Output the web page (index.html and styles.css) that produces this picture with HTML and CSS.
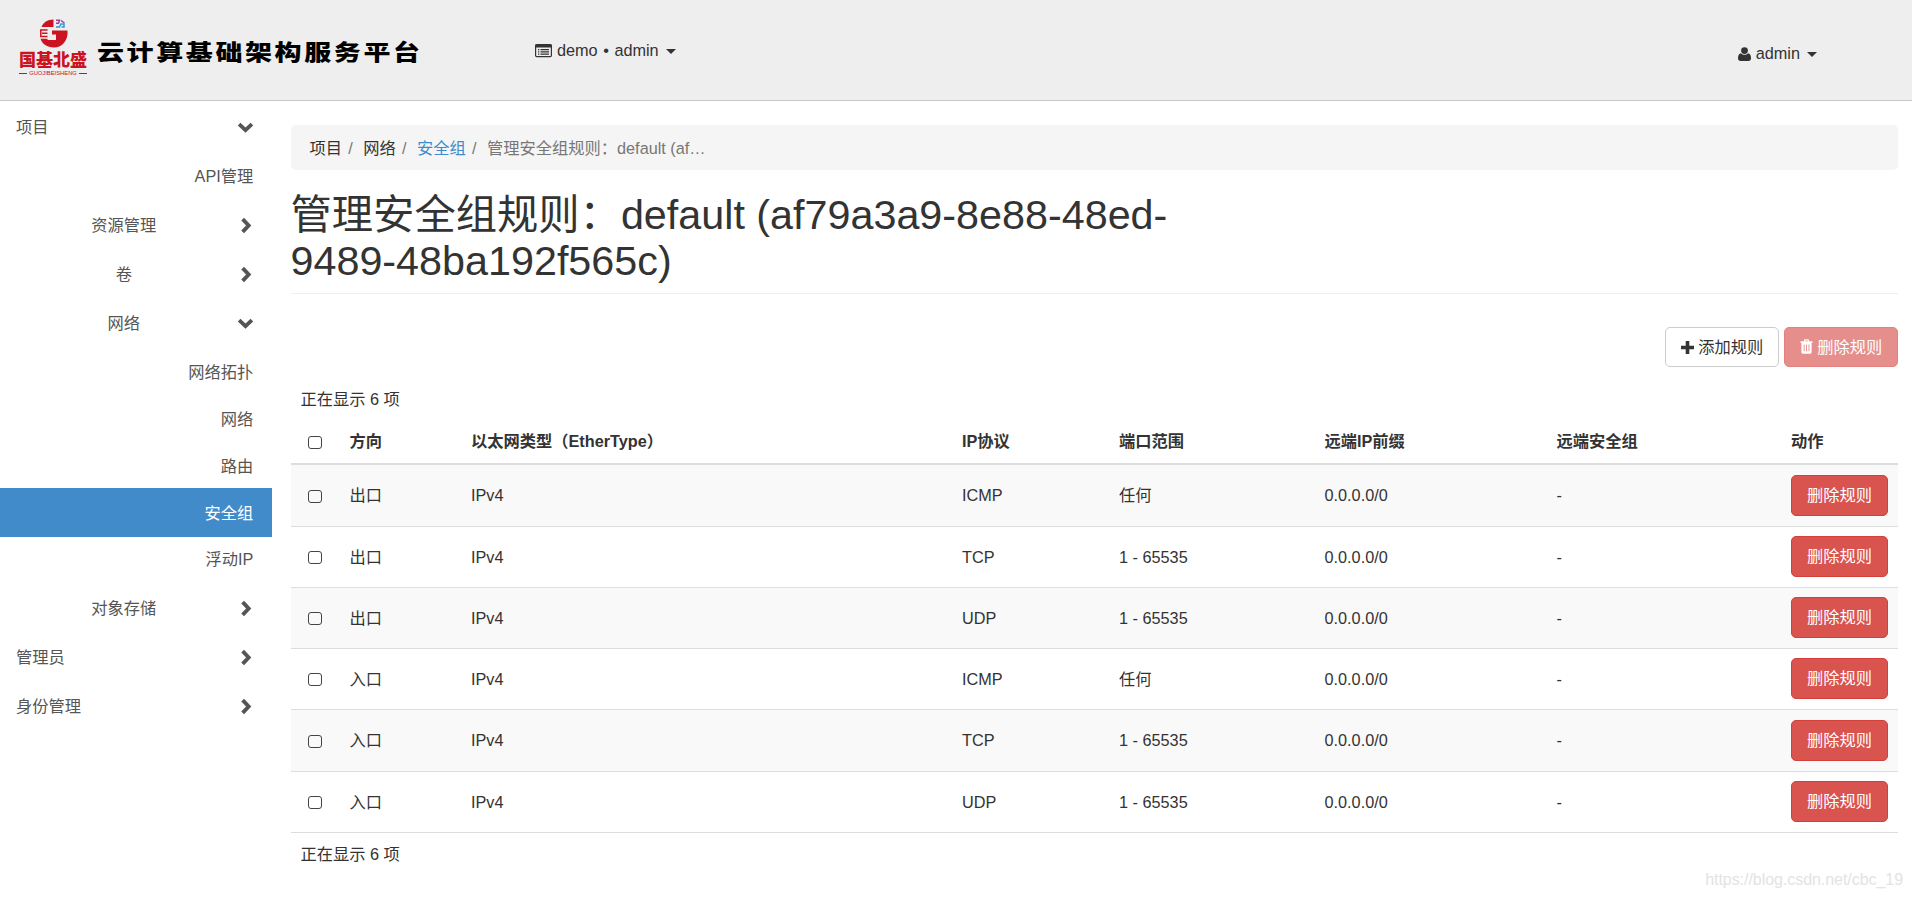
FILE: index.html
```html
<!DOCTYPE html>
<html lang="zh-CN">
<head>
    <meta charset="UTF-8">
    <meta name="viewport" content="width=device-width, initial-scale=1.0">
    <title>管理安全组规则</title>
    <link rel="stylesheet" href="styles.css">
</head>
<body>
    <!-- 图标 -->
    <svg width="0" height="0" class="sprite">
        <symbol id="chevron-down" viewBox="0 0 16 16"><path d="M2 4.800l6 5.600 6-5.600" fill="none" stroke="currentColor" stroke-width="3.600"/></symbol>
        <symbol id="chevron-right" viewBox="0 0 16 16"><path d="M5.300 2l5.700 6-5.700 6" fill="none" stroke="currentColor" stroke-width="3.600"/></symbol>
        <symbol id="trash" viewBox="0 0 13 15"><path d="M4 2.200V1.300C4 .6 4.500 .3 5 .3h3c.5 0 1 .3 1 1v.9h3.500v1.600H11.600V13c0 1-.6 1.700-1.400 1.700H2.800c-.8 0-1.400-.7-1.400-1.700V3.800H.5V2.200zM5.200 2.200h2.600v-.8H5.200zM3.700 5.500v6.800h.9V5.500zm2.400 0v6.800H7V5.500zm2.400 0v6.800h.9V5.500z" fill="currentColor" fill-rule="evenodd"/></symbol>
    </svg>

    <!-- 顶部导航 -->
    <header class="navbar">
        <div class="brand">
            <div class="logo">
                <svg class="emblem" width="30" height="29" viewBox="0 0 30 29">
                    <path d="M14.500 .5V8H2.500C4 3.500 8.500 .5 14.500 .5z" fill="#cb1420"/>
                    <path d="M13 11.500h15.500C29.500 21 23.500 28.500 15 28.500 8 28.500 3 25 1.500 19.800H8.500v1.200H17v-5.500h-4z" fill="#cb1420"/>
                    <path d="M8.500 11H1.800v6.500h6.700M3 14.200h5.500" fill="none" stroke="#cb1420" stroke-width="1.500"/>
                    <path d="M17 1.200h3.500l-1 3H17M22 1.500l3.500 2.500" fill="none" stroke="#a43fa6" stroke-width="1.500"/>
                    <path d="M17 8h3.500l1.500-3h3v3h-2.500" fill="none" stroke="#2b9bd8" stroke-width="1.500"/>
                </svg>
                <div class="logo-name">国基北盛</div>
                <div class="logo-en">GUOJIBEISHENG</div>
            </div>
            <div class="brand-title">云计算基础架构服务平台</div>
        </div>
        <div class="nav-item project">
            <svg width="17" height="14" viewBox="0 0 17 14"><rect x=".6" y=".6" width="15.800" height="12" rx="1.200" fill="none" stroke="#333" stroke-width="1.200"/><path d="M.5 .5h16v3H.5zM3 5h1.300v1.200H3zM5.500 5H14v1.200H5.500zM3 7.300h1.300v1.200H3zM5.500 7.300H14v1.200H5.500zM3 9.600h1.300v1.200H3zM5.500 9.600H14v1.200H5.500z" fill="#333"/></svg>
            <span>demo <b class="dot">•</b> admin</span>
            <i class="caret"></i>
        </div>
        <div class="nav-item user">
            <svg width="13" height="14" viewBox="0 0 13 14"><circle cx="6.500" cy="3.600" r="3.400" fill="#333"/><path d="M3 6.300C1 6.500 0 8.500 0 11.300 0 13 1 14 2.500 14h8c1.500 0 2.500-1 2.500-2.700 0-2.800-1-4.800-3-5-2 2-5 2-7 0z" fill="#333"/></svg>
            <span>admin</span>
            <i class="caret"></i>
        </div>
    </header>

    <div class="wrapper">
        <!-- 侧边栏 -->
        <nav class="sidebar">
            <div class="panel top">项目<svg class="arrow"><use href="#chevron-down"/></svg></div>
            <div class="leaf first">API管理</div>
            <div class="panel">资源管理<svg class="arrow"><use href="#chevron-right"/></svg></div>
            <div class="panel">卷<svg class="arrow"><use href="#chevron-right"/></svg></div>
            <div class="panel">网络<svg class="arrow"><use href="#chevron-down"/></svg></div>
            <div class="leaf first">网络拓扑</div>
            <div class="leaf">网络</div>
            <div class="leaf">路由</div>
            <div class="leaf active">安全组</div>
            <div class="leaf">浮动IP</div>
            <div class="panel">对象存储<svg class="arrow"><use href="#chevron-right"/></svg></div>
            <div class="panel top">管理员<svg class="arrow"><use href="#chevron-right"/></svg></div>
            <div class="panel top">身份管理<svg class="arrow"><use href="#chevron-right"/></svg></div>
        </nav>

        <!-- 主内容 -->
        <main class="content">
            <ol class="breadcrumb">
                <li>项目</li>
                <li>网络</li>
                <li><a>安全组</a></li>
                <li class="current">管理安全组规则：default (af…</li>
            </ol>

            <div class="page-header">
                <h1>管理安全组规则：default (af79a3a9-8e88-48ed-9489-48ba192f565c)</h1>
            </div>

            <div class="actions">
                <button class="btn"><svg width="13" height="13" viewBox="0 0 13 13"><path d="M4.700 0h3.600v4.700H13v3.600H8.300V13H4.700V8.300H0V4.700h4.700z" fill="currentColor"/></svg> 添加规则</button>
                <button class="btn btn-danger" disabled><svg width="13" height="15"><use href="#trash"/></svg> 删除规则</button>
            </div>

            <div class="table-count">正在显示 6 项</div>
            <table>
                <colgroup>
                    <col class="c-check"><col class="c-dir"><col class="c-ether"><col class="c-proto"><col class="c-port"><col class="c-prefix"><col class="c-group"><col>
                </colgroup>
                <thead>
                    <tr><th><i class="check"></i></th><th>方向</th><th>以太网类型（EtherType）</th><th>IP协议</th><th>端口范围</th><th>远端IP前缀</th><th>远端安全组</th><th>动作</th></tr>
                </thead>
                <tbody>
                    <tr><td><i class="check"></i></td><td>出口</td><td>IPv4</td><td>ICMP</td><td>任何</td><td>0.0.0.0/0</td><td>-</td><td><button class="btn btn-danger">删除规则</button></td></tr>
                    <tr><td><i class="check"></i></td><td>出口</td><td>IPv4</td><td>TCP</td><td>1 - 65535</td><td>0.0.0.0/0</td><td>-</td><td><button class="btn btn-danger">删除规则</button></td></tr>
                    <tr><td><i class="check"></i></td><td>出口</td><td>IPv4</td><td>UDP</td><td>1 - 65535</td><td>0.0.0.0/0</td><td>-</td><td><button class="btn btn-danger">删除规则</button></td></tr>
                    <tr><td><i class="check"></i></td><td>入口</td><td>IPv4</td><td>ICMP</td><td>任何</td><td>0.0.0.0/0</td><td>-</td><td><button class="btn btn-danger">删除规则</button></td></tr>
                    <tr><td><i class="check"></i></td><td>入口</td><td>IPv4</td><td>TCP</td><td>1 - 65535</td><td>0.0.0.0/0</td><td>-</td><td><button class="btn btn-danger">删除规则</button></td></tr>
                    <tr><td><i class="check"></i></td><td>入口</td><td>IPv4</td><td>UDP</td><td>1 - 65535</td><td>0.0.0.0/0</td><td>-</td><td><button class="btn btn-danger">删除规则</button></td></tr>
                </tbody>
            </table>
            <div class="table-count bottom">正在显示 6 项</div>
        </main>
    </div>
    <div class="watermark">https://blog.csdn.net/cbc_19</div>
</body>
</html>
```

FILE: styles.css
```css
* {
    box-sizing: border-box;
}
body {
    margin: 0;
    height: 898px;
    overflow: hidden;
    position: relative;
    background-color: #fff;
    color: #333;
    font-family: "Liberation Sans", "Noto Sans CJK SC", sans-serif;
    font-size: 16.25px;
    line-height: 23.2px;
}
.sprite {
    position: absolute;
}
.navbar {
    display: flex;
    height: 101px;
    background-color: #eee;
    border-bottom: 1px solid #c8c8c8;
}
.brand {
    display: flex;
    width: 535px;
    padding-left: 19px;
}
.logo {
    width: 68px;
    padding-top: 19px;
    color: #cb1420;
    text-align: center;
}
.emblem {
    display: block;
    margin: 0 auto 0 20px;
}
.logo-name {
    margin-top: 3px;
    font-size: 17px;
    font-weight: 900;
    line-height: 20px;
    white-space: nowrap;
}
.logo-en {
    display: flex;
    align-items: center;
    justify-content: center;
    gap: 2px;
    margin-top: -1px;
    font-size: 5.8px;
    line-height: 6px;
}
.logo-en::before,
.logo-en::after {
    content: "";
    width: 9px;
    height: 1px;
    background-color: #cb1420;
}
.brand-title {
    margin: 38px 0 0 10px;
    height: 30px;
    color: #000;
    font-size: 27px;
    font-weight: 900;
    line-height: 30px;
    letter-spacing: 2.6px;
    white-space: nowrap;
    transform: scaleY(0.8);
}
.nav-item {
    display: flex;
    align-items: center;
    height: 24px;
}
.nav-item svg {
    margin-right: 5px;
}
.dot {
    margin: 0 1px;
    font-weight: normal;
}
.project {
    margin-top: 39px;
}
.user {
    margin: 42px 95px 0 auto;
}
.caret {
    margin-left: 7px;
    border: 5px solid transparent;
    border-top-color: #333;
    border-bottom: 0;
}
.wrapper {
    display: flex;
}
.sidebar {
    width: 272px;
    padding-top: 1px;
    color: #555;
}
.panel {
    position: relative;
    height: 49px;
    padding: 14px 24.5px 0 0;
    text-align: center;
}
.panel.top {
    padding-left: 16px;
    text-align: left;
}
.arrow {
    position: absolute;
    top: 16.5px;
    right: 18.5px;
    width: 17px;
    height: 17px;
}
.leaf {
    height: 49px;
    margin-top: -2px;
    padding: 14px 18.75px 0 0;
    text-align: right;
}
.leaf.first {
    margin-top: 0;
}
.leaf.active {
    background-color: #428bca;
    color: #fff;
}
.leaf.active + .leaf {
    margin-top: -3px;
}
.content {
    width: 1607px;
    margin-left: 19px;
    padding-top: 24px;
}
.breadcrumb {
    display: flex;
    height: 45px;
    margin: 0;
    padding: 12px 18.5px 10px;
    background-color: #f5f5f5;
    border-radius: 5px;
    list-style: none;
}
.breadcrumb li + li::before {
    content: "/";
    padding: 0 10.5px 0 6.25px;
    color: #777;
}
.breadcrumb a {
    color: #428bca;
}
.breadcrumb .current {
    color: #777;
}
.page-header {
    height: 124px;
    padding-top: 22px;
    border-bottom: 1px solid #eee;
}
h1 {
    width: 900px;
    margin: 0 0 0 -0.5px;
    font-size: 41.3px;
    font-weight: normal;
    line-height: 46px;
}
.actions {
    display: flex;
    justify-content: flex-end;
    gap: 5px;
    margin-top: 33px;
}
.btn {
    height: 40px;
    padding: 0 15px;
    border: 1px solid #ccc;
    border-radius: 5px;
    background-color: #fff;
    color: #333;
    font-family: inherit;
    font-size: 16.25px;
    line-height: 23px;
    white-space: nowrap;
}
.actions .btn {
    width: 114px;
    padding: 0;
}
.btn svg {
    vertical-align: -1px;
}
.btn-danger {
    background-color: #d9534f;
    border-color: #d43f3a;
    color: #fff;
}
.btn:disabled {
    opacity: 0.65;
}
.table-count {
    margin-top: 21px;
    padding-left: 9.5px;
}
.table-count.bottom {
    margin-top: 10px;
}
table {
    width: 1607px;
    margin-top: 8px;
    border-collapse: collapse;
    table-layout: fixed;
}
th,
td {
    padding: 0 10px;
    text-align: left;
}
th {
    height: 45px;
    border-bottom: 2px solid #ddd;
}
td {
    height: 61.2px;
    padding-top: 1px;
    border-bottom: 1px solid #ddd;
}
tbody tr:first-child td {
    height: 62.2px;
}
td .btn {
    display: block;
    height: 41px;
    margin-bottom: 2px;
}
tbody tr:nth-child(odd) {
    background-color: #f9f9f9;
}
.c-check { width: 48.5px; }
.c-dir { width: 121.5px; }
.c-ether { width: 491px; }
.c-proto { width: 157px; }
.c-port { width: 205.5px; }
.c-prefix { width: 232px; }
.c-group { width: 234.5px; }
.check {
    display: block;
    width: 14px;
    height: 13px;
    margin: 0 0 0 7px;
    border: 1.5px solid #444;
    border-radius: 3px;
}
th .check {
    margin-top: 2px;
}
.watermark {
    position: absolute;
    right: 9px;
    bottom: 7px;
    color: #e3e3e3;
    font-size: 16px;
    letter-spacing: -0.05px;
}
```
